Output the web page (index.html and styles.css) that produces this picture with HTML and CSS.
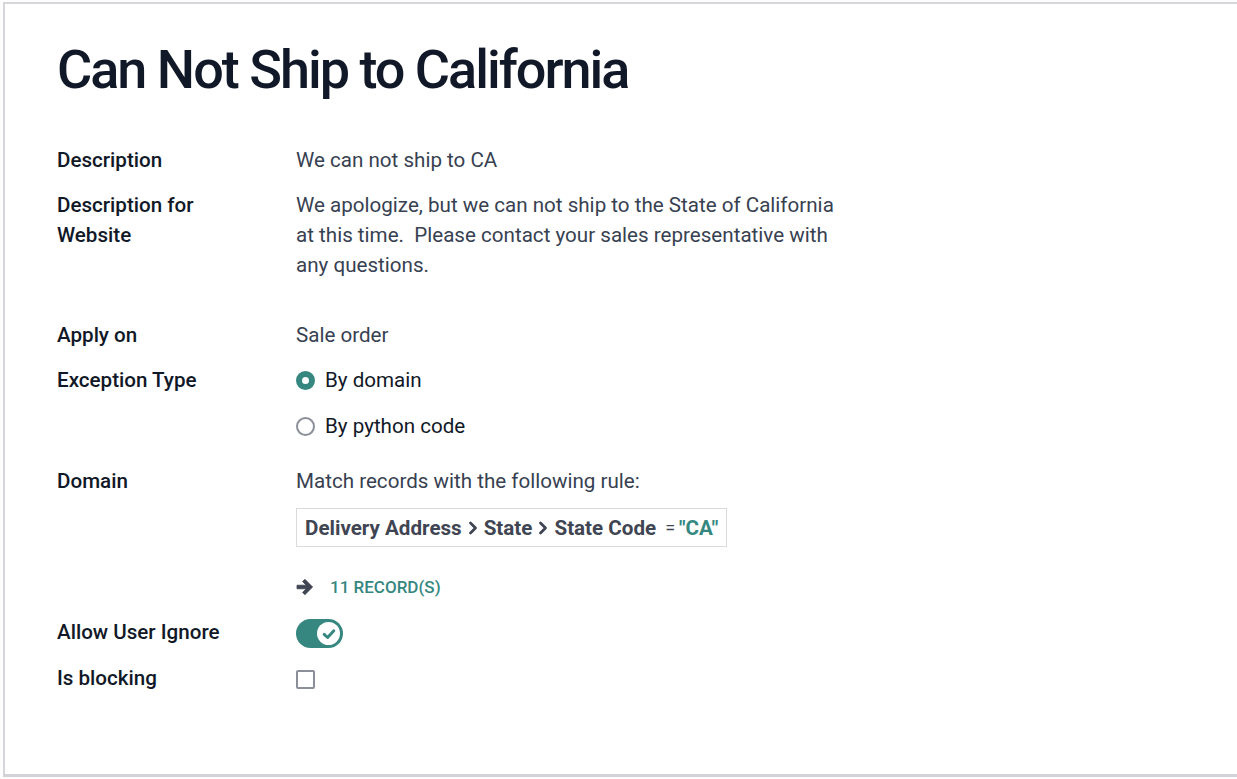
FILE: index.html
```html
<!DOCTYPE html>
<html lang="en">
<head>
  <meta charset="UTF-8">
  <meta name="viewport" content="width=device-width, initial-scale=1.0">
  <title>Can Not Ship to California</title>
  <link rel="stylesheet" href="styles.css">
</head>
<body>
  <div class="sheet">
    <h1 class="title">Can Not Ship to California</h1>

    <div class="form">
      <div class="row">
        <div class="label">Description</div>
        <div class="value">We can not ship to CA</div>
      </div>

      <div class="row">
        <div class="label">Description for<br>Website</div>
        <div class="value text">We apologize, but we can not ship to the State of California at this time.  Please contact your sales representative with any questions.</div>
      </div>

      <div class="row spaced">
        <div class="label">Apply on</div>
        <div class="value">Sale order</div>
      </div>

      <div class="row">
        <div class="label">Exception Type</div>
        <div class="value radios">
          <label class="radio"><span class="dot checked"></span>By domain</label>
          <label class="radio"><span class="dot"></span>By python code</label>
        </div>
      </div>

      <div class="row domain-row">
        <div class="label">Domain</div>
        <div class="value">
          <div>Match records with the following rule:</div>
          <div class="domain">
            <span class="path">Delivery Address</span>
            <svg class="chev" viewBox="0 0 10 14" width="10" height="14"><path d="M2.5 2 L7.5 7 L2.5 12" fill="none" stroke="#3f4552" stroke-width="2.8" stroke-linecap="round" stroke-linejoin="round"/></svg>
            <span class="path">State</span>
            <svg class="chev" viewBox="0 0 10 14" width="10" height="14"><path d="M2.5 2 L7.5 7 L2.5 12" fill="none" stroke="#3f4552" stroke-width="2.8" stroke-linecap="round" stroke-linejoin="round"/></svg>
            <span class="path">State Code</span>
            <span class="op">=</span>
            <span class="lit">"CA"</span>
          </div>
          <div class="records">
            <svg class="arrow" viewBox="0 0 18 18" width="18" height="18"><path d="M1 7.2 H10.2 L6.6 3.6 L8.9 1.3 L16.6 9 L8.9 16.7 L6.6 14.4 L10.2 10.8 H1 Z" fill="#3f4552" stroke="#3f4552" stroke-width="0.8" stroke-linejoin="round"/></svg>
            <span>11 record(s)</span>
          </div>
        </div>
      </div>

      <div class="row">
        <div class="label">Allow User Ignore</div>
        <div class="value">
          <span class="toggle">
            <span class="knob">
              <svg viewBox="0 0 16 16" width="16" height="16"><path d="M3.2 8.4 L6.6 11.5 L12.8 4.8" fill="none" stroke="#35877f" stroke-width="3" stroke-linecap="round" stroke-linejoin="round"/></svg>
            </span>
          </span>
        </div>
      </div>

      <div class="row">
        <div class="label">Is blocking</div>
        <div class="value"><span class="checkbox"></span></div>
      </div>
    </div>
  </div>
</body>
</html>
```

FILE: styles.css
```css
html, body {
  margin: 0;
  padding: 0;
  background-color: #fdfdfd;
}

body {
  font-family: Roboto, "Liberation Sans", sans-serif;
  font-size: 20.6px;
  line-height: 30px;
  color: #374151;
}

.sheet {
  margin: 2px 0 0 3px;
  height: 775px;
  box-sizing: border-box;
  background-color: #ffffff;
  border-top: 2px solid #d6d6da;
  border-left: 2px solid #d6d6da;
  border-bottom: 3px solid #d2d3d8;
  padding-left: 52px;
}

.title {
  margin: 33px 0 42px 0;
  font-size: 54px;
  line-height: 66px;
  font-weight: 500;
  letter-spacing: -2px;
  color: #111827;
}

.form {
  display: flex;
  flex-direction: column;
  gap: 15px;
}

.row {
  display: grid;
  grid-template-columns: 239px 1fr;
}

.row.spaced {
  margin-top: 25px;
}

.row.domain-row {
  margin-top: 10px;
}

.label {
  font-weight: 500;
  color: #111827;
}

.value {
  color: #374151;
}

.value.text {
  max-width: 548px;
  white-space: pre-wrap;
}

.radios {
  display: flex;
  flex-direction: column;
  gap: 16px;
}

.radio {
  display: flex;
  align-items: center;
  gap: 10px;
  color: #111827;
}

.dot {
  width: 19px;
  height: 19px;
  box-sizing: border-box;
  border-radius: 50%;
  border: 2px solid #8b8f99;
  background-color: #ffffff;
}

.dot.checked {
  border: 6px solid #35877f;
  background-color: #ffffff;
}

.domain {
  display: inline-flex;
  align-items: center;
  margin-top: 12px;
  height: 39px;
  box-sizing: border-box;
  padding: 0 8px;
  border: 1px solid #d8dadd;
  font-weight: 700;
  color: #3f4552;
  gap: 6px;
}

.chev {
  display: block;
}

.op {
  font-weight: 400;
  margin-left: 3px;
  font-size: 18px;
}

.lit {
  color: #35877f;
  margin-left: -2px;
}

.records {
  display: flex;
  align-items: center;
  gap: 16px;
  margin-top: 25px;
  font-size: 17px;
  font-weight: 500;
  color: #35877f;
  text-transform: uppercase;
}

.arrow {
  display: block;
}

.toggle {
  display: inline-flex;
  align-items: center;
  justify-content: flex-end;
  vertical-align: middle;
  width: 47px;
  height: 29px;
  box-sizing: border-box;
  padding: 0 3px;
  border-radius: 15px;
  background-color: #35877f;
}

.knob {
  display: flex;
  align-items: center;
  justify-content: center;
  width: 23px;
  height: 23px;
  border-radius: 50%;
  background-color: #ffffff;
}

.checkbox {
  display: inline-block;
  vertical-align: middle;
  width: 19px;
  height: 19px;
  box-sizing: border-box;
  border: 2px solid #8b8f99;
  border-radius: 2px;
  background-color: #ffffff;
}
```
